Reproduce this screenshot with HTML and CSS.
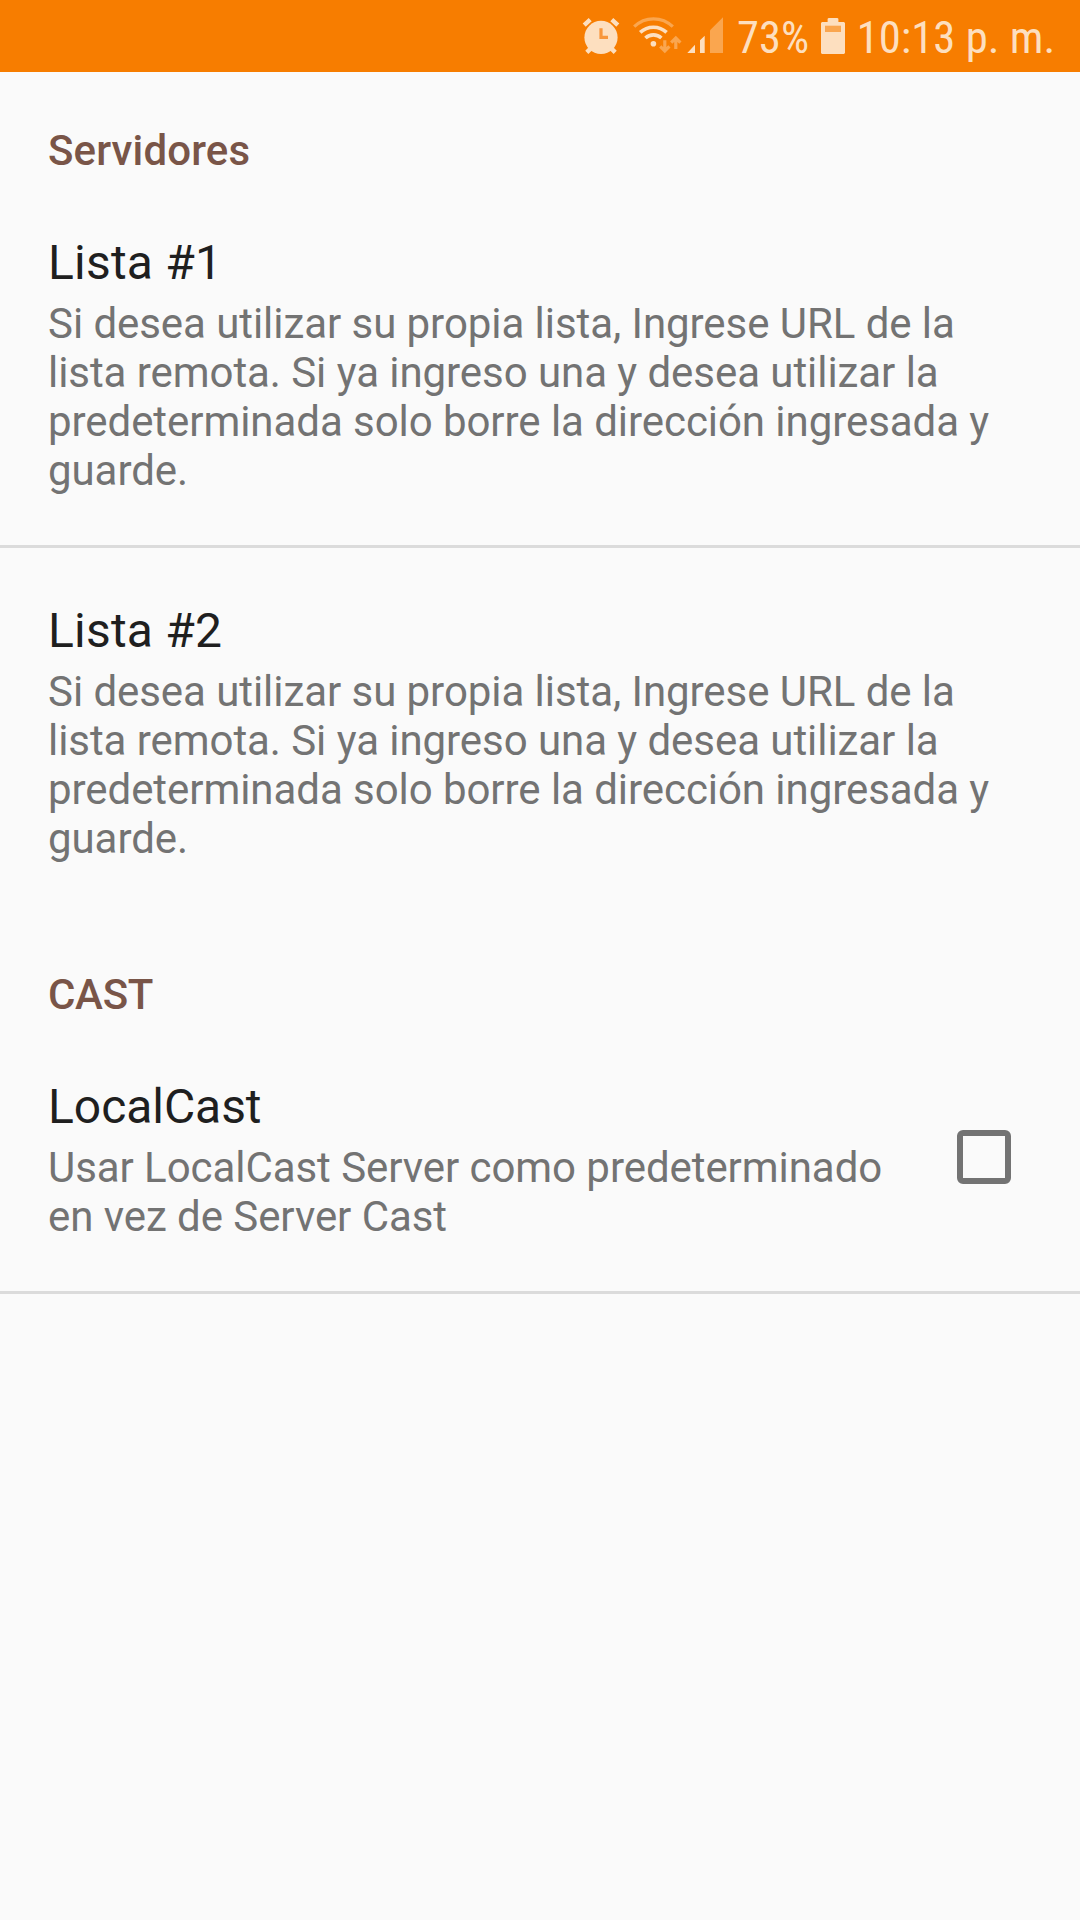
FILE: index.html
```html
<!DOCTYPE html>
<html lang="es">
<head>
<meta charset="utf-8">
<title>Servidores</title>
<link rel="stylesheet" href="styles.css">
</head>
<body>
<header class="status-bar">
  <svg class="status-icons" width="158" height="72" viewBox="576 0 158 72">
    <g class="stroke">
      <path stroke-width="4.4" d="M584.2 25.2l6-5.6M617.8 25.2l-6-5.6M586.8 52.4l5-5M615.2 52.4l-5-5"/>
      <path stroke-width="3.6" d="M640.2 32.4a19.3 19.3 0 0 1 26.4 0M645.4 38a11.8 11.8 0 0 1 16 0"/>
    </g>
    <circle class="solid" cx="601" cy="37.4" r="16.6"/>
    <path class="hands" d="M601 28.3v9.1h7"/>
    <path class="stroke faint" stroke-width="3.2" d="M634.2 26.7a27.5 27.5 0 0 1 38.6 0"/>
    <circle class="solid" cx="653.4" cy="43.7" r="2.8"/>
    <path class="stroke faint" stroke-width="3.2" d="M664.8 40.2v11M660.2 46.4l4.6 4.6 4.6-4.6M675.8 49v-11M671.2 42.6l4.6-4.6 4.6 4.6"/>
    <path class="solid" d="M687.3 53l7.7-8.3V53zM700 53V40.2l4.7-4.5V53z"/>
    <path class="solid faint" d="M710 53V30.3l13-13V53z"/>
  </svg>
  <svg class="status-text" width="82" height="72" viewBox="734 0 82 72">
    <text x="737" y="52.7" textLength="72" lengthAdjust="spacingAndGlyphs">73%</text>
  </svg>
  <svg width="36" height="72" viewBox="816 0 36 72">
    <path class="solid" d="M822 22h5.6v-3.2l1-.8h8.8l1 .8V22h5.6l1 1v30l-1 1h-22l-1-1V23z"/>
    <path class="gauge" d="M825 25.7h16v6.3h-16z"/>
  </svg>
  <svg class="status-text" width="228" height="72" viewBox="852 0 228 72">
    <text x="856.7" y="52.7" textLength="198.5" lengthAdjust="spacingAndGlyphs">10:13 p. m.</text>
  </svg>
</header>
<main>
  <section>
    <h2 class="category">Servidores</h2>
    <div class="preference">
      <h3 class="title">Lista #1</h3>
      <p class="summary">Si desea utilizar su propia lista, Ingrese URL de la lista remota. Si ya ingreso una y desea utilizar la predeterminada solo borre la dirección ingresada y guarde.</p>
    </div>
    <div class="preference divided">
      <h3 class="title">Lista #2</h3>
      <p class="summary">Si desea utilizar su propia lista, Ingrese URL de la lista remota. Si ya ingreso una y desea utilizar la predeterminada solo borre la dirección ingresada y guarde.</p>
    </div>
  </section>
  <section class="cast">
    <h2 class="category">CAST</h2>
    <label class="preference with-control">
      <span>
        <span class="title">LocalCast</span>
        <span class="summary">Usar LocalCast Server como predeterminado en vez de Server Cast</span>
      </span>
      <input class="checkbox" type="checkbox" aria-label="LocalCast">
    </label>
  </section>
</main>
</body>
</html>
```
FILE: styles.css
```css
* { box-sizing: border-box; }
body {
  margin: 0;
  min-height: 1920px;
  background: #fafafa;
  font-family: Roboto, "Liberation Sans", sans-serif;
}
.status-bar {
  display: flex;
  justify-content: flex-end;
  height: 72px;
  background: #f77d00;
}
.status-bar svg { display: block; flex: none; }
.solid { fill: #fddfbf; }
.stroke { fill: none; stroke: #fddfbf; }
.hands { fill: none; stroke: #f8963a; stroke-width: 3.2; }
.gauge { fill: #faa64f; }
.solid.faint { fill: #faa64f; }
.stroke.faint { stroke: #faa64f; }
.status-text text {
  fill: #fddfbf;
  font-family: "Roboto Condensed", Roboto, sans-serif;
  font-size: 45px;
}
.category {
  margin: 0;
  padding: 54px 48px 5px;
  color: #795548;
  font-size: 42px;
  line-height: 49px;
  font-weight: 500;
  letter-spacing: 0.15px;
}
.preference { padding: 55px 48px 50px; }
.divided { border-top: 3px solid #dbdbdb; }
.title {
  display: block;
  margin: 0;
  color: #1f1f1f;
  font-size: 48px;
  font-weight: 400;
  line-height: 56px;
  letter-spacing: 0.2px;
}
.summary {
  display: block;
  margin: 8px 0 0;
  color: #737373;
  font-size: 42px;
  line-height: 49px;
  letter-spacing: -0.06px;
}
.cast .category { padding-top: 57px; letter-spacing: -0.3px; }
.cast .title { letter-spacing: -0.05px; }
.with-control {
  display: grid;
  grid-template-columns: 855px 54px;
  column-gap: 54px;
  align-items: center;
  border-bottom: 3px solid #dbdbdb;
}
.checkbox {
  appearance: none;
  width: 54px;
  height: 54px;
  margin: 0 0 6px;
  border: 6px solid #737373;
  border-radius: 6px;
}
```
